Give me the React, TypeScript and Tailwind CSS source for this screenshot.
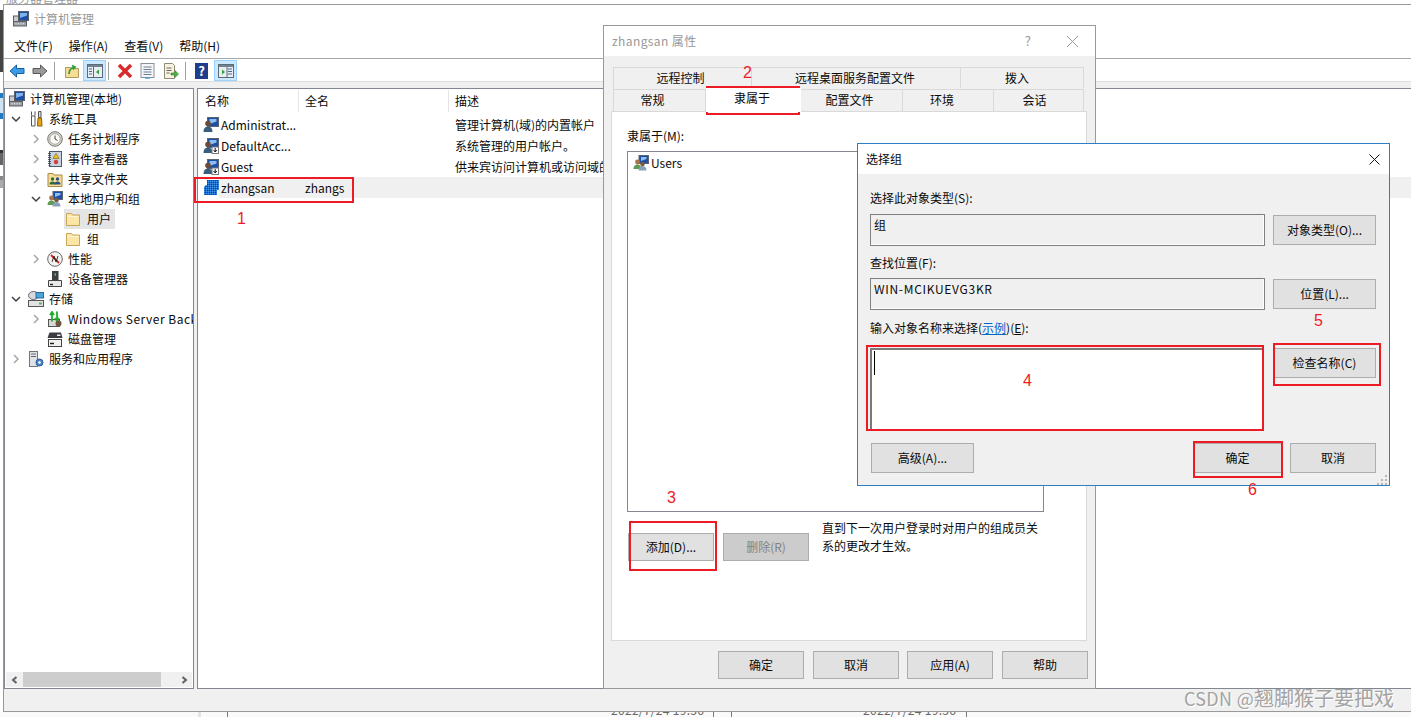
import type { ReactNode } from "react";

// small drawn icons, 16px unless stated
function Svg({ size = 16, children }: { size?: number; children: ReactNode }) {
  return (
    <svg width={size} height={size} viewBox="0 0 16 16" className="shrink-0">
      {children}
    </svg>
  );
}

function ComputerIcon() {
  return (
    <Svg>
      <rect x="5.500" y=".5" width="10" height="9" fill="#1c4fa8" stroke="#56606e" />
      <path d="M7 2h7v2.500L7 7z" fill="#7fb2ea" />
      <rect x=".5" y="5" width="5" height="6" fill="#c9ccd0" stroke="#5c6066" />
      <rect x=".5" y="10.500" width="13" height="4.500" fill="#9aa0a6" stroke="#5c6066" />
      <path d="M2.500 12.800h1M5 12.800h1M7.500 12.800h1M10 12.800h1" stroke="#fff" />
    </Svg>
  );
}

function UserIcon({ down, checker }: { down?: boolean; checker?: boolean }) {
  if (checker) {
    return (
      <Svg>
        <defs>
          <pattern id="chk" width="2" height="2" patternUnits="userSpaceOnUse">
            <rect width="2" height="2" fill="#1f6fd0" />
            <rect width="1" height="1" fill="#0a3f9a" />
            <rect x="1" y="1" width="1" height="1" fill="#3f94e8" />
          </pattern>
        </defs>
        <path d="M4 0h12v10h-2v5H1V7l2-2h1z" fill="url(#chk)" />
      </Svg>
    );
  }
  return (
    <Svg>
      <rect x="4.500" y=".5" width="11" height="9" fill="#1c4fa8" stroke="#5a6470" />
      <path d="M6.500 2h7v2.500l-7 2.500z" fill="#8fbdee" />
      <circle cx="5" cy="6.500" r="2.800" fill="#6b4a36" />
      <path d="M.5 15c0-3.800 2-5.500 4.500-5.500s4.500 1.700 4.500 5.500z" fill="#3a5f7c" />
      {down && (
        <>
          <rect x="9" y="9" width="6.500" height="6.500" fill="#fff" stroke="#777" />
          <path d="M12.200 10v3.500M10.600 12l1.600 2 1.600-2" fill="none" stroke="#111" />
        </>
      )}
    </Svg>
  );
}

function GroupIcon() {
  return (
    <Svg>
      <rect x="6" y=".5" width="9.500" height="8" fill="#1c4fa8" stroke="#5a6470" />
      <path d="M8 2h5.500v2L8 6z" fill="#8fbdee" />
      <circle cx="4.500" cy="7" r="2.400" fill="#a9744a" />
      <path d="M.5 14c0-3 1.700-4.500 4-4.500s4 1.500 4 4.500z" fill="#5e9a52" />
      <circle cx="9.500" cy="9" r="2.300" fill="#7b5a3e" />
      <path d="M5.500 15.500c0-3 1.700-4.500 4-4.500s4 1.500 4 4.500z" fill="#8aa0b8" />
    </Svg>
  );
}

function FolderIcon() {
  return (
    <Svg>
      <path d="M1.500 2.500h5l1 1.500h7v10.500h-13z" fill="#fbe6a6" stroke="#c7a55a" />
      <path d="M2.500 5.500h11" stroke="#fff4cf" />
    </Svg>
  );
}

function ToolsIcon() {
  return (
    <Svg>
      <path d="M3.500.5v4M7 .5v4M3.500 5h3.500v10H3.500z" fill="#fff" stroke="#555" />
      <path d="M10.500 .5h2.500v6h-2.500z" fill="#d9d9d9" stroke="#555" />
      <path d="M10 7h3.500l.5 8h-4.500z" fill="#e8a615" stroke="#8a5f00" />
    </Svg>
  );
}

function ClockIcon() {
  return (
    <Svg>
      <circle cx="8" cy="8" r="7.300" fill="#d9d5c6" stroke="#777" />
      <circle cx="8" cy="8" r="5.300" fill="#fbfaf4" stroke="#aaa" />
      <path d="M8 4.500V8l2.500 1.500" fill="none" stroke="#444" />
    </Svg>
  );
}

function EventIcon() {
  return (
    <Svg>
      <rect x="2.500" y=".5" width="12" height="15" fill="#c9d3dd" stroke="#4b5a6a" />
      <path d="M2.500 2v12.500" stroke="#2d3a48" strokeWidth="2.500" strokeDasharray="1 1" />
      <path d="M9 2.500l3 5H6z" fill="#efc21a" stroke="#7a5a00" strokeWidth=".6" />
      <circle cx="9" cy="11" r="2.200" fill="#d04040" />
    </Svg>
  );
}

function ShareIcon() {
  return (
    <Svg>
      <path d="M1 2.500h5l1 1.500h8v11.500H1z" fill="#f5dc98" stroke="#a98b45" />
      <circle cx="5.500" cy="8" r="1.700" fill="#2c6e3a" />
      <path d="M2.500 13.500c0-2.200 1.200-3 3-3s3 .8 3 3z" fill="#2c6e3a" />
      <circle cx="10.500" cy="8" r="1.700" fill="#2c4f8a" />
      <path d="M7.500 13.500c0-2.200 1.200-3 3-3s3 .8 3 3z" fill="#2c4f8a" />
    </Svg>
  );
}

function PerfIcon() {
  return (
    <Svg>
      <circle cx="8" cy="8" r="7.300" fill="#f4f4ef" stroke="#666" />
      <path d="M4 4L12 12" stroke="#d02020" strokeWidth="1.800" />
      <path d="M5 11l2-6 2 6 2-6" fill="none" stroke="#222" strokeWidth=".9" />
    </Svg>
  );
}

function DeviceIcon() {
  return (
    <Svg>
      <rect x="5" y="0" width="6.500" height="10" fill="#3d3f42" />
      <rect x="7.500" y="2.500" width="1.500" height="2" fill="#5fd35f" />
      <path d="M1.500 9.500h13v6h-13z" fill="#e9e9e9" stroke="#444" />
      <path d="M3 13.500h3" stroke="#222" strokeWidth="1.400" />
    </Svg>
  );
}

function StorageIcon() {
  return (
    <Svg>
      <ellipse cx="5.500" cy="4.500" rx="5" ry="4" fill="#d7dbdf" stroke="#667" />
      <rect x="8" y="1.500" width="7.500" height="5.500" fill="#4aa4d8" stroke="#2b6c96" />
      <rect x=".5" y="9.500" width="15" height="6" fill="#e3e3e3" stroke="#555" />
      <rect x="11" y="11.500" width="3" height="2" fill="#4fbf4f" />
    </Svg>
  );
}

function BackupIcon() {
  return (
    <Svg>
      <rect x="1.500" y="8.500" width="11" height="7" fill="#d8d8d8" stroke="#555" />
      <path d="M5 .5v10M3 4l2-3 2 3" fill="none" stroke="#1fae2a" strokeWidth="1.800" />
      <path d="M10 10V.5M8 7l2 3 2-3" fill="none" stroke="#1fae2a" strokeWidth="1.800" />
      <circle cx="11.500" cy="12.500" r="3" fill="#70553f" />
    </Svg>
  );
}

function DiskIcon() {
  return (
    <Svg>
      <path d="M2.500 1.500h11.500l1.500 5.500H.5z" fill="#3a3c40" />
      <rect x="10" y="3.500" width="3.500" height="1.500" fill="#eee" />
      <rect x="1.500" y="8.500" width="13" height="7" fill="#f1f1f1" stroke="#444" />
      <path d="M3 12.500h4" stroke="#222" strokeWidth="1.500" />
    </Svg>
  );
}

function ServiceIcon() {
  return (
    <Svg>
      <rect x="1.500" y=".5" width="8" height="15" fill="#dfe3e8" stroke="#6b7480" />
      <path d="M3 3h5M3 5.500h5" stroke="#667" />
      <circle cx="11.500" cy="11.500" r="3.500" fill="#4d86c6" stroke="#2b5a92" />
      <circle cx="11.500" cy="11.500" r="1.200" fill="#fff" />
    </Svg>
  );
}

function Chevron({ open }: { open: boolean }) {
  return (
    <svg width="10" height="10" viewBox="0 0 10 10" className="shrink-0">
      {open ? (
        <path d="M1 3l4 4 4-4" fill="none" stroke="#404040" strokeWidth="1.500" />
      ) : (
        <path d="M3 1l4 4-4 4" fill="none" stroke="#a6a6a6" strokeWidth="1.500" />
      )}
    </svg>
  );
}

const tree: {
  label: string;
  level: number;
  chevron?: "open" | "closed";
  icon: ReactNode;
  selected?: boolean;
  latin?: boolean;
}[] = [
  { label: "计算机管理(本地)", level: 0, icon: <ComputerIcon /> },
  { label: "系统工具", level: 1, chevron: "open", icon: <ToolsIcon /> },
  { label: "任务计划程序", level: 2, chevron: "closed", icon: <ClockIcon /> },
  { label: "事件查看器", level: 2, chevron: "closed", icon: <EventIcon /> },
  { label: "共享文件夹", level: 2, chevron: "closed", icon: <ShareIcon /> },
  { label: "本地用户和组", level: 2, chevron: "open", icon: <GroupIcon /> },
  { label: "用户", level: 3, icon: <FolderIcon />, selected: true },
  { label: "组", level: 3, icon: <FolderIcon /> },
  { label: "性能", level: 2, chevron: "closed", icon: <PerfIcon /> },
  { label: "设备管理器", level: 2, icon: <DeviceIcon /> },
  { label: "存储", level: 1, chevron: "open", icon: <StorageIcon /> },
  { label: "Windows Server Backup", level: 2, chevron: "closed", icon: <BackupIcon />, latin: true },
  { label: "磁盘管理", level: 2, icon: <DiskIcon /> },
  { label: "服务和应用程序", level: 1, chevron: "closed", icon: <ServiceIcon /> },
];

function TreeRow({ row }: { row: (typeof tree)[number] }) {
  const pad =
    row.level === 0
      ? "pl-[4px]"
      : row.level === 1
        ? "pl-[6px]"
        : row.level === 2
          ? "pl-[26px]"
          : "pl-[59px]";
  const slot = row.level === 1 ? "w-[17px]" : "w-[16px]";
  return (
    <div className={`flex h-[20px] items-center ${pad}`}>
      {row.level > 0 && row.level < 3 && (
        <span className={`flex shrink-0 items-center ${slot}`}>
          {row.chevron && <Chevron open={row.chevron === "open"} />}
        </span>
      )}
      <div
        className={`flex h-[20px] items-center whitespace-nowrap ${
          row.level === 3 ? "w-[51px] pl-[1px]" : ""
        } ${row.selected ? "bg-[#e5e5e5]" : ""}`}
      >
        {row.icon}
        <span
          className={`${row.level === 3 ? "ml-[6px]" : "ml-[5px]"} ${
            row.latin ? "tracking-[0.5px]" : ""
          }`}
        >
          {row.label}
        </span>
      </div>
    </div>
  );
}

const users = [
  { name: "Administrat...", desc: "管理计算机(域)的内置帐户", icon: <UserIcon /> },
  { name: "DefaultAcc...", desc: "系统管理的用户帐户。", icon: <UserIcon down /> },
  { name: "Guest", desc: "供来宾访问计算机或访问域的内", icon: <UserIcon down /> },
];

function ToolSep({ className = "" }: { className?: string }) {
  return <div className={`h-[18px] w-px bg-[#a0a0a0] ${className}`} />;
}

function PaneIcon({ right }: { right?: boolean }) {
  return (
    <svg width="16" height="14" viewBox="0 0 16 14">
      <rect x=".5" y=".5" width="15" height="13" fill="#e9eef2" stroke="#5c6b78" />
      <rect x="1" y="1" width="14" height="2" fill="#71818f" />
      {right ? (
        <>
          <path d="M4 5.500v5l3-2.500z" fill="#2fa33a" />
          <path d="M10 5h4M10 7.500h4M10 10h4" stroke="#456a96" />
          <path d="M9 3v10" stroke="#5c6b78" />
        </>
      ) : (
        <>
          <path d="M2 5h3M2 7.500h3M2 10h3" stroke="#456a96" />
          <path d="M6.500 3v10" stroke="#5c6b78" />
          <path d="M12 5.500v5l-3-2.500z" fill="#2fa33a" />
        </>
      )}
    </svg>
  );
}

function Toolbar() {
  return (
    <div className="flex h-[21px] items-center pl-[5px]">
      <svg width="16" height="14" viewBox="0 0 16 14" className="mr-[7px]">
        <path d="M1 7l6.500-6v3.500H15v5H7.500V13z" fill="#3c9be8" stroke="#15609f" />
      </svg>
      <svg width="16" height="14" viewBox="0 0 16 14">
        <path d="M15 7L8.500 1v3.500H1v5h7.500V13z" fill="#9a9a9a" stroke="#5a5a5a" />
      </svg>
      <ToolSep className="ml-[6px]" />
      <span className="ml-[9px] mr-[3px]">
        <Svg>
          <path d="M1.500 4.500h5l1 1h7v9h-13z" fill="#f6dd95" stroke="#b4975a" />
          <path d="M5 11c0-4 2-6 5-7M8 2.500L11 4 9 6.500" fill="none" stroke="#2ea043" strokeWidth="1.800" />
        </Svg>
      </span>
      <div className="flex h-[21px] w-[23px] items-center justify-center border border-[#99d1ff] bg-[#cce8ff]">
        <PaneIcon />
      </div>
      <ToolSep className="ml-[2px]" />
      <span className="ml-[8px] mr-[7px]">
        <svg width="16" height="16" viewBox="0 0 16 16">
          <path d="M2 2l12 12M14 2L2 14" stroke="#d92b2b" strokeWidth="3.500" />
        </svg>
      </span>
      <span className="mr-[8px]">
        <svg width="15" height="16" viewBox="0 0 15 16">
          <rect x="1" y=".5" width="13" height="14" fill="#f4f6f8" stroke="#8a929a" />
          <path d="M3.500 4h8M3.500 6.500h8M3.500 9h8M3.500 11.500h8" stroke="#6d7f96" />
          <path d="M5 15h5" stroke="#3ca0e0" strokeWidth="1.500" />
        </svg>
      </span>
      <Svg>
        <path d="M1.500.5h8l2 2v13h-10z" fill="#f8f3df" stroke="#8e8a78" />
        <path d="M3.500 5h5M3.500 7.500h5M3.500 10h3" stroke="#666" />
        <path d="M8 10h4V7.500l3.500 3.500-3.500 3.500V12H8z" fill="#4db848" stroke="#2b8028" strokeWidth=".6" />
      </Svg>
      <ToolSep className="ml-[6px]" />
      <span className="ml-[9px] mr-[6px] flex h-[16px] w-[13px] items-center justify-center bg-[#1f3e8c] text-[13px] font-bold text-white">
        ?
      </span>
      <div className="flex h-[21px] w-[23px] items-center justify-center border border-[#99d1ff] bg-[#cce8ff]">
        <PaneIcon right />
      </div>
    </div>
  );
}

function MainWindow() {
  return (
    <div className="absolute left-[3px] right-0 top-[4px] flex h-[708px] flex-col border-b border-l border-t border-[#999] bg-white">
      <div className="flex h-[28px] shrink-0 items-center gap-[5px] pl-[9px] text-[#999]">
        <ComputerIcon />
        <span>计算机管理</span>
      </div>
      <div className="flex h-[25px] shrink-0 items-center gap-[16px] pl-[10px] pt-[1px]">
        <span>文件(F)</span>
        <span>操作(A)</span>
        <span>查看(V)</span>
        <span>帮助(H)</span>
      </div>
      <div className="shrink-0 border-b border-t border-b-[#dcdcdc] border-t-[#a8a8a8] pt-[1px]">
        <Toolbar />
      </div>
      <div className="flex min-h-0 flex-1 flex-col bg-[#f0f0f0]">
        <div className="flex min-h-0 flex-1 gap-[3px] pt-[6px]">
          {/* tree */}
          <div className="flex w-[190px] shrink-0 flex-col border border-[#828790] bg-white">
            <div className="min-h-0 flex-1 overflow-hidden">
              {tree.map((row) => (
                <TreeRow key={row.label} row={row} />
              ))}
            </div>
            <div className="mx-[1px] mb-[1px] flex h-[15px] items-center bg-[#f0f0f0]">
              <span className="flex w-[17px] items-center pl-[5px]">
                <svg width="8" height="8" viewBox="0 0 8 8">
                  <path d="M5.500 1L2 4l3.500 3" fill="none" stroke="#606060" strokeWidth="2" />
                </svg>
              </span>
              <div className="h-[15px] w-[138px] bg-[#cdcdcd]" />
              <span className="flex flex-1 items-center justify-end pr-[4px]">
                <svg width="8" height="8" viewBox="0 0 8 8">
                  <path d="M2.500 1L6 4 2.500 7" fill="none" stroke="#606060" strokeWidth="2" />
                </svg>
              </span>
            </div>
          </div>
          {/* list */}
          <div className="min-w-0 flex-1 border-b border-l border-t border-[#828790] bg-white">
            <div className="flex h-[25px] items-start pt-[1px] leading-[22px]">
              <span className="h-[22px] w-[100px] pl-[7px]">名称</span>
              <span className="h-[22px] w-px bg-[#e5e5e5]" />
              <span className="h-[22px] w-[149px] pl-[6px]">全名</span>
              <span className="h-[22px] w-px bg-[#e5e5e5]" />
              <span className="h-[22px] pl-[6px]">描述</span>
            </div>
            {users.map((u) => (
              <div key={u.name} className="flex h-[21px] items-center pl-[5px]">
                {u.icon}
                <span className="ml-[2px] w-[84px] whitespace-nowrap">{u.name}</span>
                <span className="w-[150px]" />
                <span className="whitespace-nowrap">{u.desc}</span>
              </div>
            ))}
            <div className="flex h-[21px] items-center pl-[5px]">
              <UserIcon checker />
              <div className="flex h-[21px] flex-1 items-center bg-[#f0f0f0] pl-[2px]">
                <span className="w-[84px]">zhangsan</span>
                <span>zhangs</span>
              </div>
            </div>
          </div>
        </div>
        <div className="h-[22px] shrink-0" />
      </div>
    </div>
  );
}

function Button({
  children,
  className = "",
  disabled,
}: {
  children: ReactNode;
  className?: string;
  disabled?: boolean;
}) {
  return (
    <div
      className={`flex shrink-0 items-center justify-center border border-[#adadad] ${
        disabled ? "bg-[#cccccc] text-[#838383]" : "bg-[#e1e1e1]"
      } ${className}`}
    >
      {children}
    </div>
  );
}

function Tab({
  children,
  className = "",
}: {
  children: ReactNode;
  className?: string;
}) {
  return (
    <div
      className={`flex items-center justify-center border-r border-t border-[#d9d9d9] ${className}`}
    >
      {children}
    </div>
  );
}

function PropertiesDialog() {
  return (
    <div className="absolute left-[603px] top-[25px] flex h-[664px] w-[493px] flex-col border border-[#999] bg-[#f0f0f0]">
      <div className="flex h-[30px] shrink-0 items-center justify-between bg-white pl-[8px] pr-[16px] text-[#999]">
        <span className="text-[12px] tracking-[0.4px]">zhangsan 属性</span>
        <div className="flex items-center gap-[35px]">
          <span className="text-[13px]">?</span>
          <svg width="13" height="13" viewBox="0 0 13 13">
            <path d="M1 1l11 11M12 1L1 12" stroke="#999" />
          </svg>
        </div>
      </div>
      <div className="ml-[9px] mt-[11px] flex h-[22px] w-[471px] border-l border-[#d9d9d9] pb-[1px]">
        <Tab className="w-[138px] pr-[4px]">远程控制</Tab>
        <Tab className="w-[209px] pr-[2px]">远程桌面服务配置文件</Tab>
        <Tab className="flex-1 pr-[10px]">拨入</Tab>
      </div>
      <div className="ml-[9px] flex h-[22px] w-[471px] border-l border-[#d9d9d9]">
        <Tab className="w-[92px] pb-[2px] pr-[14px]">常规</Tab>
        <div className="z-10 -mt-[1px] flex h-[24px] w-[95px] items-center justify-center bg-white pb-[4px] pr-[3px]">
          隶属于
        </div>
        <Tab className="w-[102px] pb-[2px] pr-[4px]">配置文件</Tab>
        <Tab className="w-[91px] pb-[2px] pr-[12px]">环境</Tab>
        <Tab className="flex-1 pb-[2px] pr-[8px]">会话</Tab>
      </div>
      <div className="ml-[7px] flex h-[530px] w-[476px] flex-col border border-[#d9d9d9] bg-white pl-[15px]">
        <div className="pt-[15px] leading-[18px]">隶属于(M):</div>
        <div className="mt-[6px] h-[361px] w-[417px] border border-[#828790] pl-[5px] pt-[3px]">
          <div className="flex items-center gap-[2px]">
            <GroupIcon />
            <span>Users</span>
          </div>
        </div>
        <div className="mt-[7px] flex pl-[1px]">
          <Button className="mt-[14px] h-[28px] w-[86px]">添加(D)...</Button>
          <Button disabled className="ml-[9px] mt-[14px] h-[28px] w-[86px]">
            删除(R)
          </Button>
          <p className="ml-[13px] w-[222px] leading-[18px]">
            直到下一次用户登录时对用户的组成员关系的更改才生效。
          </p>
        </div>
      </div>
      <div className="ml-[114px] mt-[10px] flex">
        <Button className="h-[28px] w-[86px]">确定</Button>
        <Button className="ml-[9px] h-[28px] w-[86px]">取消</Button>
        <Button className="ml-[8px] h-[28px] w-[86px]">应用(A)</Button>
        <Button className="ml-[9px] h-[28px] w-[86px]">帮助</Button>
      </div>
    </div>
  );
}

function ReadOnlyField({ children }: { children: ReactNode }) {
  return (
    <div className="h-[32px] w-[395px] border border-[#808080] pl-[3px] pt-[2px] shadow-[inset_-1px_-1px_0_#fff]">
      {children}
    </div>
  );
}

function SelectGroupDialog() {
  return (
    <div className="absolute left-[857px] top-[143px] flex h-[343px] w-[533px] flex-col border border-[#2b7fc4] bg-[#f0f0f0]">
      <div className="flex h-[30px] shrink-0 items-center justify-between bg-white pl-[8px] pr-[9px]">
        <span>选择组</span>
        <svg width="11" height="11" viewBox="0 0 11 11">
          <path d="M.5.5l10 10M10.500.5l-10 10" stroke="#111" />
        </svg>
      </div>
      <div className="flex-1 pl-[12px]">
        <div className="pt-[15px] leading-[18px]">选择此对象类型(S):</div>
        <div className="mt-[7px] flex gap-[8px]">
          <ReadOnlyField>组</ReadOnlyField>
          <Button className="mt-px h-[30px] w-[103px]">对象类型(O)...</Button>
        </div>
        <div className="mt-[8px] leading-[18px]">查找位置(F):</div>
        <div className="mt-[6px] flex gap-[8px]">
          <ReadOnlyField>
            <span className="tracking-[0.7px]">WIN-MCIKUEVG3KR</span>
          </ReadOnlyField>
          <Button className="mt-px h-[30px] w-[103px]">位置(L)...</Button>
        </div>
        <div className="mt-[9px] leading-[18px]">
          输入对象名称来选择(<span className="text-[#0066cc] underline">示例</span>)(<span className="underline">E</span>):
        </div>
        <div className="mt-[11px] flex gap-[9px]">
          <div className="h-[81px] w-[394px] border-l-2 border-t-2 border-[#7a7a7a] bg-white pl-[2px] pt-[1px]">
            <div className="h-[24px] w-px bg-black" />
          </div>
          <Button className="h-[30px] w-[103px]">检查名称(C)</Button>
        </div>
        <div className="mt-[14px] flex">
          <Button className="ml-px h-[30px] w-[103px]">高级(A)...</Button>
          <Button className="ml-[219px] h-[30px] w-[89px]">确定</Button>
          <Button className="ml-[8px] h-[30px] w-[86px]">取消</Button>
        </div>
      </div>
      {/* resize grip */}
      <svg width="12" height="12" viewBox="0 0 12 12" className="absolute bottom-0 right-0">
        <path d="M8 2h2v2H8zM4 6h2v2H4zM8 6h2v2H8zM0 10h2v2H0zM4 10h2v2H4zM8 10h2v2H8z" fill="#b5b5b5" />
      </svg>
    </div>
  );
}

const marks = [
  "left-[194px] top-[177px] h-[26px] w-[160px]",
  "left-[706px] top-[86px] h-[29px] w-[94px]",
  "left-[629px] top-[521px] h-[50px] w-[88px]",
  "left-[866px] top-[345px] h-[86px] w-[398px]",
  "left-[1273px] top-[343px] h-[43px] w-[108px]",
  "left-[1193px] top-[441px] h-[37px] w-[90px]",
];

const numbers = [
  { n: "1", cls: "left-[237px] top-[209px]" },
  { n: "2", cls: "left-[743px] top-[63px]" },
  { n: "3", cls: "left-[667px] top-[488px]" },
  { n: "4", cls: "left-[1023px] top-[371px]" },
  { n: "5", cls: "left-[1314px] top-[311px]" },
  { n: "6", cls: "left-[1248px] top-[480px]" },
];

// sliver of other windows left of the main one
const desktopEdge = [
  "h-[10px] bg-white",
  "h-[62px] bg-[#444]",
  "h-[21px] bg-white",
  "h-[5px] bg-[#1f7cc4]",
  "h-[15px] bg-[#cfe2f2]",
  "h-[6px] bg-[#1f7cc4]",
  "h-[31px] bg-white",
  "h-[3px] bg-[#333]",
  "h-[12px] bg-[#666]",
  "h-[11px] bg-white",
  "h-[4px] bg-[#888]",
  "h-[8px] bg-[#aaa]",
];

export default function App() {
  return (
    <div className="relative h-[717px] w-[1411px] overflow-hidden bg-white font-['Noto_Sans_CJK_SC',sans-serif] text-[12px] leading-[16px] text-[#0a0a0a]">
      {/* desktop behind the windows */}
      <div className="absolute left-[6px] top-[-10px] text-[#999]">服务器管理器</div>
      <div className="absolute left-0 top-0 flex w-[3px] flex-col">
        {desktopEdge.map((cls, i) => (
          <div key={i} className={cls} />
        ))}
      </div>
      <div className="absolute bottom-0 left-0 right-0 flex h-[5px] bg-[#fafafa]">
        <div className="ml-[198px] h-full w-[3px] bg-[#e3e3e3]" />
        <div className="ml-[26px] h-full w-px bg-[#777]" />
        <div className="ml-[485px] h-full w-px bg-[#777]" />
        <div className="ml-[17px] h-full w-px bg-[#777]" />
        <div className="ml-[234px] h-full w-px bg-[#777]" />
      </div>
      <div className="absolute left-[611px] top-[702px] tracking-[0.3px] text-[#666]">2022/7/24 19:36</div>
      <div className="absolute left-[863px] top-[702px] tracking-[0.3px] text-[#666]">2022/7/24 19:36</div>

      <MainWindow />
      <PropertiesDialog />
      <SelectGroupDialog />

      {/* red annotations */}
      {marks.map((cls) => (
        <div key={cls} className={`absolute border-2 border-[#ed1c24] ${cls}`} />
      ))}
      {numbers.map((m) => (
        <span
          key={m.n}
          className={`absolute font-['Liberation_Sans',sans-serif] text-[16px] leading-[20px] text-[#ed1c24] ${m.cls}`}
        >
          {m.n}
        </span>
      ))}

      {/* watermark */}
      <div className="absolute left-[1184px] top-[686px] whitespace-nowrap text-[18px] leading-[24px] tracking-[0.3px] text-[#a3a3a3] [text-shadow:1px_1px_0_#fff]">
        CSDN @<span className="text-[20px] tracking-normal">翘脚猴子要把戏</span>
      </div>
    </div>
  );
}
